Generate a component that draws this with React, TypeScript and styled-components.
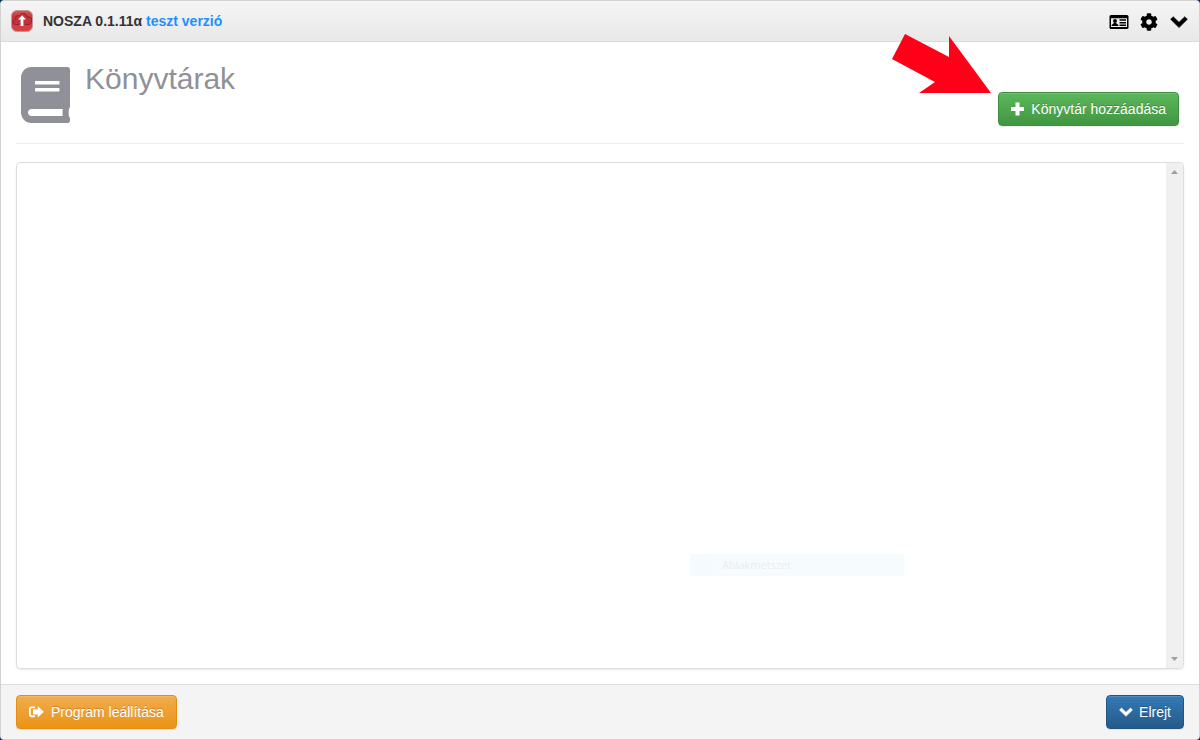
import React from "react";
import styled, { createGlobalStyle } from "styled-components";
import { FaBook, FaCog } from "react-icons/fa";

const GlobalStyle = createGlobalStyle`
  *, *::before, *::after { box-sizing: border-box; }
  body {
    margin: 0;
    background: #0b3563;
    color: #333;
    font: 14px/20px "Liberation Sans", Arial, sans-serif;
  }
`;

const Window = styled.div`
  position: relative;
  display: flex;
  flex-direction: column;
  min-height: 100vh;
  background: #fff;
  border: 1px solid #d2d2d2;
  border-radius: 4px;
  overflow: hidden;
`;

const TitleBar = styled.header`
  display: flex;
  align-items: center;
  gap: 10px;
  height: 41px;
  padding: 0 10px;
  background: linear-gradient(#f5f5f5, #e8e8e8);
  border-bottom: 1px solid #dadada;
`;

const AppName = styled.strong`
  flex: 1;
`;

const VersionLink = styled.a`
  color: #1e90ff;
  text-decoration: none;
`;

const WindowTools = styled.nav`
  display: flex;
  gap: 10px;
  padding-top: 2px;
`;

const ToolButton = styled.button`
  display: flex;
  align-items: center;
  justify-content: center;
  width: 20px;
  height: 20px;
  padding: 0;
  border: 0;
  background: none;
  color: #000;
  cursor: pointer;
`;

const Content = styled.main`
  flex: 1;
  display: flex;
  flex-direction: column;
  gap: 18px;
  padding: 0 15px 15px;
`;

const PageHeader = styled.div`
  display: flex;
  justify-content: space-between;
  align-items: flex-end;
  height: 102px;
  padding: 0 5px 17px;
  border-bottom: 1px solid #eee;
`;

const Heading = styled.div`
  display: flex;
  gap: 15px;
  align-items: flex-start;
  color: #909098;
  padding-bottom: 3px;
`;

const BookIcon = styled(FaBook)`
  width: 49px;
  height: 56px;
`;

const Title = styled.h1`
  margin: 0;
  padding-top: 4px;
  font-size: 30px;
  line-height: 16px;
  font-weight: 400;
`;

const tones = {
  green: ["#5cb85c", "#419641", "#3e8f3e"],
  orange: ["#f0ad4e", "#eb9316", "#e38d13"],
  blue: ["#337ab7", "#265a88", "#245580"],
};

const Button = styled.button<{ $tone: keyof typeof tones }>`
  display: inline-flex;
  align-items: center;
  gap: 6px;
  height: 34px;
  padding: 0 12px;
  border: 1px solid ${(p) => tones[p.$tone][2]};
  border-radius: 4px;
  background: linear-gradient(
    ${(p) => tones[p.$tone][0]},
    ${(p) => tones[p.$tone][1]}
  );
  color: #fff;
  font: inherit;
  text-shadow: 0 -1px 0 rgba(0, 0, 0, 0.2);
  box-shadow:
    inset 0 1px 0 rgba(255, 255, 255, 0.15),
    0 1px 1px rgba(0, 0, 0, 0.075);
  white-space: nowrap;
  cursor: pointer;
`;

const LibraryList = styled.section`
  flex: 1;
  display: flex;
  justify-content: flex-end;
  border: 1px solid #ddd;
  border-radius: 4px;
  box-shadow: 0 1px 2px rgba(0, 0, 0, 0.075);
  overflow: hidden;
`;

const ScrollTrack = styled.div`
  display: flex;
  flex-direction: column;
  justify-content: space-between;
  width: 17px;
  background: #f0f0f0;
`;

const ScrollButton = styled.button`
  display: flex;
  align-items: center;
  justify-content: center;
  height: 18px;
  padding: 0;
  border: 0;
  background: none;
  color: #a0a0a0;
`;

const Footer = styled.footer`
  display: flex;
  justify-content: space-between;
  padding: 10px 15px;
  background: #f4f4f4;
  border-top: 1px solid #ddd;
`;

const Pointer = styled.svg`
  position: absolute;
  top: 33px;
  right: 207px;
  pointer-events: none;
`;

const SnipLabel = styled.div`
  position: absolute;
  right: 295px;
  bottom: 163px;
  width: 214px;
  padding-left: 32px;
  background: linear-gradient(90deg, #f5faff, #f6fbfe 20%);
  color: #ececec;
  font: 11px/22px "Open Sans", "Noto Sans", sans-serif;
`;

const Logo = () => (
  <svg width="22" height="22" viewBox="0 0 22 22" aria-hidden="true">
    <defs>
      <linearGradient id="logoRed" x1="0" y1="0" x2="0" y2="1">
        <stop offset="0" stopColor="#cf5a5c" />
        <stop offset="0.3" stopColor="#c8363b" />
        <stop offset="1" stopColor="#d64342" />
      </linearGradient>
    </defs>
    <rect x="0.5" y="0.5" width="21" height="21" rx="5.5" fill="url(#logoRed)" stroke="#c09a9b" />
    <path
      d="M8 14.5H5C0.8 14.5 0.6 9.3 4.6 8.8C4.6 5.6 7.2 4.8 8.6 6C10 2.4 15.4 2.6 16.2 7C19.6 6.6 21 8.6 20.6 11C20.3 13.4 19 14.5 17 14.5H14"
      fill="#c0333a"
      stroke="#93222a"
    />
    <path d="M11 5.2L15 9.6H12.4V16H9.6V9.6H7Z" fill="#fff" />
  </svg>
);

const CardIcon = () => (
  <svg width="20" height="16" viewBox="0 0 20 16" aria-hidden="true">
    <rect x="0.5" y="1" width="19" height="14" rx="1.5" fill="#000" />
    <path d="M2 4.2H18V13H2Z" fill="#eee" />
    <circle cx="6" cy="7" r="2" fill="#000" />
    <path d="M2.6 12V11L5 9H7L9.4 11V12Z" fill="#000" />
    <path d="M10.5 5.2H17V6.8H10.5ZM10.5 8H17V9.4H10.5ZM10.5 10.6H17V12H10.5Z" fill="#000" />
  </svg>
);

const Chevron = ({ size }: { size: number }) => (
  <svg width={size} height={size} viewBox="0 0 18 18" aria-hidden="true">
    <path
      d="M0.6 6.3L3.2 3.7L9 9.3L14.8 3.7L17.4 6.3L9 14.6Z"
      fill="currentColor"
      stroke="currentColor"
      strokeWidth="0.6"
      strokeLinejoin="round"
    />
  </svg>
);

const PlusIcon = () => (
  <svg width="14" height="14" viewBox="0 0 14 14" aria-hidden="true">
    <path d="M4.5 0.5H8.5V5H13V9H8.5V13.5H4.5V9H0V5H4.5Z" fill="currentColor" />
  </svg>
);

const ExitIcon = () => (
  <svg width="16" height="14" viewBox="0 0 16 14" aria-hidden="true">
    <path d="M6 2.3H2.6Q0.9 2.3 0.9 4V9.6Q0.9 11.3 2.6 11.3H6" fill="none" stroke="currentColor" strokeWidth="1.8" />
    <path d="M8.8 1.2L14.8 6.8L8.8 12.4V9.4H4V4.2H8.8Z" fill="currentColor" />
  </svg>
);

const ScrollArrow = ({ down }: { down?: boolean }) => (
  <svg width="7" height="4" viewBox="0 0 7 4" aria-hidden="true">
    <path d={down ? "M0 0H7L3.5 4Z" : "M0 4H7L3.5 0Z"} fill="currentColor" />
  </svg>
);

export default function App() {
  return (
    <>
      <GlobalStyle />
      <Window>
        <TitleBar>
          <Logo />
          <AppName>
            NOSZA 0.1.11α <VersionLink href="#teszt">teszt verzió</VersionLink>
          </AppName>
          <WindowTools>
            <ToolButton aria-label="Névjegy">
              <CardIcon />
            </ToolButton>
            <ToolButton aria-label="Beállítások">
              <FaCog size={18} />
            </ToolButton>
            <ToolButton aria-label="Elrejtés">
              <Chevron size={18} />
            </ToolButton>
          </WindowTools>
        </TitleBar>
        <Content>
          <PageHeader>
            <Heading>
              <BookIcon aria-hidden="true" />
              <Title>Könyvtárak</Title>
            </Heading>
            <Button $tone="green">
              <PlusIcon />
              Könyvtár hozzáadása
            </Button>
          </PageHeader>
          <LibraryList aria-label="Könyvtárak">
            <ScrollTrack>
              <ScrollButton aria-label="Görgetés fel">
                <ScrollArrow />
              </ScrollButton>
              <ScrollButton aria-label="Görgetés le">
                <ScrollArrow down />
              </ScrollButton>
            </ScrollTrack>
          </LibraryList>
        </Content>
        <Footer>
          <Button $tone="orange">
            <ExitIcon />
            Program leállítása
          </Button>
          <Button $tone="blue">
            <Chevron size={14} />
            Elrejt
          </Button>
        </Footer>
        <SnipLabel>Ablakmetszet</SnipLabel>
        <Pointer width="102" height="64" viewBox="0 0 102 64" aria-hidden="true">
          <path d="M15 0L59 23L59 2L101 59H29L45 48L2 25Z" fill="#ff0018" />
        </Pointer>
      </Window>
    </>
  );
}
